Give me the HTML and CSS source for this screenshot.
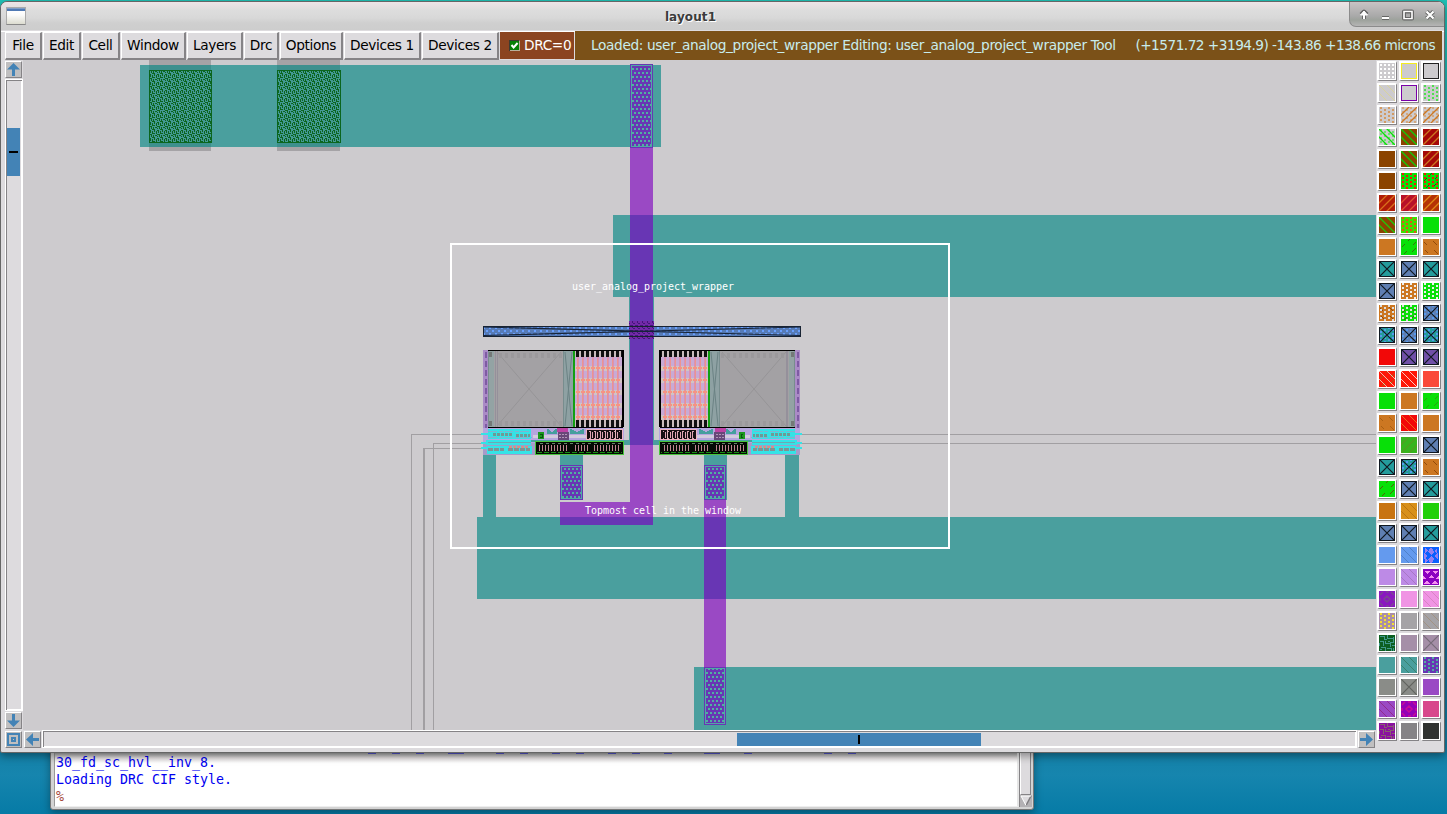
FILE: index.html
```html
<!DOCTYPE html>
<html lang="en">
<head>
<meta charset="utf-8">
<title>layout1</title>
<link rel="stylesheet" href="styles.css">
</head>
<body>
<div class="desktop">
  <section class="console">
    <div class="term">
      <div class="cut"><svg width="800" height="1" shape-rendering="crispEdges"><path d="M312 0h8M336 0h8M360 0h8M392 0h16M440 0h8M464 0h8M496 0h8M520 0h8M552 0h8M576 0h8M608 0h8M648 0h16M688 0h8M768 0h8M792 0h8" stroke="#5555cc" stroke-width="2"/></svg></div>
      <p>30_fd_sc_hvl__inv_8.</p>
      <p>Loading DRC CIF style.</p>
      <p class="prompt">%</p>
    </div>
    <div class="term-scroll"><div class="term-thumb"></div>
      <svg width="12" height="12" viewBox="0 0 12 12"><rect width="12" height="12" fill="#b3b1b4"/><path d="M1 1H11L6 10.5Z" fill="#dddbde"/><path d="M11 1L6 10.5" stroke="#7e7c7f" stroke-width="1.5"/><path d="M6 10.5L1 1H11" fill="none" stroke="#fff"/></svg>
    </div>
  </section>

  <section class="window">
    <header class="titlebar">
      <span class="app-icon"></span>
      <h1>layout1</h1>
      <div class="controls">
        <svg width="94" height="26" viewBox="1350 2 94 26">
          <g fill="none" stroke="#666" stroke-width="4" stroke-linejoin="round"><path d="M1364 20v-6M1361 15.500l3-3 3 3M1382 19h7M1404 12.500h8v7h-8zM1426.500 12.500l7 7M1433.500 12.500l-7 7"/></g>
          <g fill="none" stroke="#fff" stroke-width="2"><path d="M1364 20v-6M1382 19h7"/><path d="M1360.500 16l3.500-4 3.500 4z" fill="#fff" stroke-width="1"/><path d="M1404 12.500h8v7h-8z" stroke-width="1.600"/><path d="M1426.500 12.500l7 7M1433.500 12.500l-7 7" stroke-width="2.200"/></g>
          <rect x="1405.500" y="14" width="5" height="4.500" fill="#aaa" stroke="#666"/>
        </svg>
      </div>
    </header>
    <nav class="menu">
      <button class="w37">File</button><button class="w38">Edit</button><button class="w38">Cell</button><button class="w65">Window</button><button class="w56">Layers</button><button class="w35">Drc</button><button class="w63">Options</button><button class="w77">Devices 1</button><button class="w77">Devices 2</button>
      <div class="drc"><svg width="11" height="11" viewBox="0 0 11 11"><path d="M0 0H11V11H0Z" fill="#b9b09a"/><path d="M0 0H11L10 1V10H1V11H0Z" fill="#3d3a30"/><path d="M1 1H10V10H1Z" fill="#068006"/><path d="M2.500 5L4.600 7.500L8.600 3" fill="none" stroke="#fff" stroke-width="2"/></svg><span>DRC=0</span></div>
      <div class="status"><span class="loaded">Loaded: user_analog_project_wrapper Editing: user_analog_project_wrapper Tool</span><span class="coords">(+1571.72 +3194.9) -143.86 +138.66 microns</span></div>
    </nav>
    <div class="work">
      <div class="vbar">
        <div class="btn"><svg width="13" height="13"><path d="M6.500 0L13 6.500H8V13H5V6.500H0Z"/></svg></div>
        <div class="trough v"><div class="thumb"><i></i></div></div>
        <div class="btn"><svg width="13" height="13"><path d="M6.500 13L13 6.500H8V0H5V6.500H0Z"/></svg></div>
      </div>
      <svg class="canvas" id="canvas" width="1353" height="670" viewBox="23 60 1353 670" shape-rendering="crispEdges"></svg>
      <div class="hbar">
        <div class="btn"><svg width="13" height="13"><path fill-rule="evenodd" d="M0 0H13V13H0ZM2 2V11H11V2ZM4 4H9V9H4ZM6 6V7H7V6Z"/></svg></div>
        <div class="btn"><svg width="13" height="13"><path d="M0 6.500L7 0V5H13V8H7V13Z"/></svg></div>
        <div class="trough h"><div class="thumb"><i></i></div></div>
        <div class="btn"><svg width="13" height="13"><path d="M13 6.500L6 0V5H0V8H6V13Z"/></svg></div>
      </div>
      <div class="palette" id="palette"></div>
    </div>
  </section>
</div>
<script src="script.js"></script>
</body>
</html>
```
FILE: styles.css
```css
* { box-sizing: border-box; }
body { margin: 0; overflow: hidden; font-family: "DejaVu Sans", sans-serif; }
.desktop {
  position: relative; width: 1447px; height: 814px; overflow: hidden;
  background: linear-gradient(#20c4b8 0, #20a5b2 200px, #2399b5 520px, #116f96 650px, #1480a6 750px, #1685ae 775px, #067ba6 814px);
}
.window {
  position: absolute; left: 0; top: 1px; width: 1445px; height: 752px;
  background: #dddbde; border: 1px solid #666;
  border-radius: 7px 7px 2px 2px; box-shadow: 0 3px 9px rgba(0,0,0,.4);
  display: flex; flex-direction: column; overflow: hidden;
}
.titlebar {
  height: 29px; flex: none; display: flex; align-items: flex-start;
  background: linear-gradient(#ece5e7 0, #e6e0e1 4px, #dddddd 8px, #d8d8d8 16px, #cfcfcf 21px, #cdcdcd 28px);
  border-bottom: 1px solid #dddbde;
}
.app-icon {
  width: 20px; height: 18px; margin: 5px 0 0 5px; border: 1px solid #aaa; border-bottom-color: #888;
  background: linear-gradient(#b4c4dc 0, #4f79b4 1px, #4f79b4 3px, #fff 3px, #fbfbfa 7px, #dcdcd0 100%);
}
.titlebar h1 { margin: 7px 0 0; width: 1322px; padding-left: 7px; text-align: center; font-size: 12px; line-height: 17px; color: #3c3c3c; text-shadow: 1px 1px #fff; letter-spacing: .1px; }
.controls {
  margin-left: auto; width: 95px; height: 25px; flex: none; border: 1px solid #8b8b8b; border-width: 0 0 1px 1px;
  border-bottom-left-radius: 7px; background: linear-gradient(#c8c4c5, #a9a9a9 14px, #9da29c 18px, #b5b5b5);
}
.controls svg { display: block; margin-top: -1px; }
.menu { height: 29px; flex: none; display: flex; gap: 1px; padding-left: 4px; padding-right: 2px; background: #dddbde; font-size: 13.7px; letter-spacing: -.36px; box-shadow: inset 0 1px #fff; }
.menu button {
  flex: none; padding: 0 0 2px; margin-top: 1px; height: 28px; border: solid; border-width: 1px 2px 2px 1px; border-color: #fff #858386 #858386 #fff;
  background: #dddbde; font: inherit; letter-spacing: inherit; color: #000; white-space: nowrap; line-height: 22px;
}
.w35 { width: 35px; } .w37 { width: 37px; } .w38 { width: 38px; } .w56 { width: 56px; } .w63 { width: 63px; } .w65 { width: 65px; } .w77 { width: 77px; }
.drc { width: 74px; flex: none; margin: 1px 0 1px; background: #8b4420; color: #fff; display: flex; align-items: center; gap: 4px; padding-left: 9px; line-height: 27px; }
.drc svg { flex: none; }
.status { flex: 1; background: #7b5118; color: #c8ecec; display: flex; justify-content: space-between; padding: 0 7px 0 16px; line-height: 28px; white-space: nowrap; }
.coords { letter-spacing: -.53px; }
.work { flex: 1; display: grid; grid-template-columns: 18px 1353px 67px; grid-template-rows: 670px 20px; padding-left: 4px; }
.vbar { display: flex; flex-direction: column; gap: 1px; padding: 1px 0; }
.btn { width: 17px; height: 17px; flex: none; padding: 1px; border: 1px solid; border-color: #fff #858386 #858386 #fff; background: #c0bfc0; }
.btn svg { display: block; fill: #4383b6; }
.trough { border: 1px solid #fff; flex: 1; background: #dddbde; box-shadow: inset 1px 1px #858386, inset -1px -1px #fff; display: flex; }
.trough.v { padding-top: 48px; padding-left: 1px; }
.trough.h { padding-left: 694px; padding-top: 2px; height: 18px; }
.thumb { background: #4383b6; display: flex; align-items: center; justify-content: center; }
.v .thumb { width: 13px; height: 48px; }
.h .thumb { width: 244px; height: 13px; }
.thumb i { background: #000; }
.v i { width: 9px; height: 2px; }
.h i { width: 2px; height: 9px; }
.canvas { display: block; background: #cdcbce; }
.hbar { grid-column: 1 / 3; grid-row: 2; display: flex; gap: 2px; padding: 0 1px 0 0; }
.hbar .btn { margin-top: 1px; }
.hbar .trough { margin: 0 -1px; }
.palette { grid-column: 3; grid-row: 1 / 3; display: grid; grid-template-columns: repeat(3, 20px); grid-auto-rows: 20px; gap: 2px; padding: 1px 0 0 1px; background: #dddbde; align-content: start; }
.swatch { border: 1px solid; border-width: 2px 1px 1px 2px; border-color: #fff #858386 #858386 #fff; padding: 0 1px 1px 0; background: #fff; display: block; width: 20px; height: 20px; overflow: hidden; }
.console {
  position: absolute; left: 50px; top: 700px; width: 984px; height: 110px; padding: 0 2px 2px 3px; display: flex;
  background: #d3d3d3; border: 1px solid #777; border-radius: 0 0 3px 3px; box-shadow: 0 3px 8px rgba(0,0,0,.35);
}
.term { flex: 1; border-left: 1px solid #999; border-bottom: 1px solid #eee; border-right: 2px solid #e6e6e6; background: linear-gradient(#aaa 0, #aaa 52px, #e8e4e5 57px, #fff 62px); padding: 52px 0 0 1px; font: 13.29px/17px "DejaVu Sans Mono", monospace; color: #0000f0; }
.cut { height: 1px; }
.cut svg { display: block; }
.term p { margin: 0; height: 17px; white-space: pre; }
.term .prompt { color: #a5483a; }
.term-scroll { width: 12px; border-left: 1px solid #858386; background: #b3b1b4; display: flex; flex-direction: column; justify-content: space-between; }
.term-thumb { height: 94px; width: 11px; border: 1px solid; border-color: #fff #858386 #858386 #fff; background: #dddbde; }
.label { font: 10px "DejaVu Sans Mono", monospace; fill: #fff; }
```
FILE: script.js
```javascript
const BG = '#cdcbce', TEAL = '#4a9f9e', PURPLE = '#9a49c4', MIX = '#6836b4';
const rect = (x1, y1, x2, y2, fill, extra = '') =>
  `<rect x="${x1}" y="${y1}" width="${x2 - x1}" height="${y2 - y1}" fill="${fill}" ${extra}/>`;
const line = (d, color, w = 1, extra = '') =>
  `<path d="${d}" fill="none" stroke="${color}" stroke-width="${w}" ${extra}/>`;
const SMOOTH = 'shape-rendering="geometricPrecision"';

/* ---- layer palette ---- */
const GREEN = '#08e008', ORANGE = '#cc7722', BROWN = '#8b4400', DRED = '#a50808', BLUE = '#5f7fb2', CYAN = '#249c9c', VIOLET = '#7050a8', GREY = '#a5a3a6';
const box = c => rect(0, 0, 16, 1, c) + rect(0, 15, 16, 16, c) + rect(0, 0, 1, 16, c) + rect(15, 0, 16, 16, c);
const marks = {
  frame: box,
  grid: c => { let s = ''; for (let y = 1; y < 16; y += 4) for (let x = 1; x < 16; x += 4) s += rect(x, y, x + 2, y + 2, c); return s; },
  dots: c => { let s = ''; for (let i = 0; i < 4; i++) for (let j = 0; j < 4; j++) { const x = 4 * i + 1, y = 4 * j + (i % 2 ? 2 : 0); s += rect(x, y, x + 2, y + 2, c); } return s; },
  back: c => line('M-1 7L9 17M-1 -1L17 17M7 -1L17 9', c, 1.3, SMOOTH),
  fwd: c => line('M-1 9L9 -1M-1 17L17 -1M7 17L17 7', c, 1.3, SMOOTH),
  backThin: c => line('M0 8L8 16M0 0L16 16M8 0L16 8', c, .75, SMOOTH),
  fwdDash: c => line('M1 8L4 5M7 2L9 0M3 15L6 12M11 13L15 9M12 6L15 3', c, .9, SMOOTH),
  backDash: c => line('M1 3L4 6M10 2L14 6M2 11L5 14M11 11L15 15', c, .9, SMOOTH),
  x: c => line('M0 0L16 16M16 0L0 16', c, 1.2, SMOOTH) + box(c),
  thinX: c => line('M0 0L16 16M16 0L0 16', c, 1.2, SMOOTH),
  tri: c => `<path d="M1 2h6l-3 3zM9 2h6l-3 3zM5 9l3-3 3 3zM0 6l3 4H0zM16 6l-3 4h3zM1 15l3-4 3 4zM9 15l3-4 3 4z" fill="${c}"/>`,
  triSide: c => `<path d="M2 1v5l3-2zM7 1l-2 4 3 3 3-3-2-4zM14 1v6l-3-3zM1 6v6l4-3zM15 6v6l-4-3zM7 16l-2-4 3-3 3 3-2 4zM2 16v-5l3 3z" fill="${c}"/>`,
  diamond: c => line('M8 5L11 8L8 11L5 8ZM1 4L4 1M12 1l3 3M1 12l3 3M12 15l3-3M7 1h3M7 15h3M1 7v3M15 7v3', c, 1.5, SMOOTH),
  weave: c => line('M1 1.500h4v3h3M8.500 0v3h5M14.500 2v5h-4M1 6.500h3v4M6 8.500h5v3M2 12.500h4v3M8 13.500h4v2M13 10.500h3M14.500 13v3M9 6.500h2M.5 8v3M1 14.500h2M11.500 9v3M5.500 1v2M6 5.500v3', c, 1)
};
const S = (bg, ...layers) => [bg, layers];
const X = (bg, dot) => dot ? S(bg, ['dots', '#5599ee'], ['x', '#101820']) : S(bg, ['x', '#101820']);
const swatches = [
  S(BG, ['grid', '#fff']), S(BG, ['frame', '#f5ec20']), S(BG, ['frame', '#222']),
  S(BG, ['backThin', '#dcd58a']), S(BG, ['frame', '#7a00a8']), S(BG, ['dots', '#50df50']),
  S(BG, ['dots', '#d29a62']), S(BG, ['dots', '#d2a880'], ['fwd', ORANGE]), S(BG, ['dots', '#d2a880'], ['fwd', ORANGE]),
  S(BG, ['dots', '#70df70'], ['back', GREEN]), S(BROWN, ['back', '#10cc08']), S(DRED, ['fwd', ORANGE]),
  S(BROWN), S(BROWN, ['back', '#10cc08']), S(DRED, ['fwd', ORANGE]),
  S(BROWN), S(GREEN, ['dots', '#f01808']), S(GREEN, ['fwdDash', '#176008'], ['dots', '#f01808']),
  S('#b01c08', ['fwd', '#d8701c']), S('#b81028', ['fwd', '#e05030']), S('#b53205', ['fwd', '#e08818']),
  S(BROWN, ['back', '#20c808']), S('#3ce000', ['dots', '#e05515']), S(GREEN),
  S(ORANGE), S(GREEN, ['fwdDash', '#396b0b']), S(ORANGE, ['backDash', '#8c4507']),
  X(CYAN), X(BLUE), X(CYAN),
  X(BLUE), S(ORANGE, ['dots', '#eee']), S(GREEN, ['dots', '#eee']),
  S(ORANGE, ['backDash', '#8c4507'], ['dots', '#ddd']), S(GREEN, ['fwdDash', '#396b0b'], ['dots', '#ddd']), X(BLUE, 1),
  X(CYAN, 1), X(BLUE, 1), X(CYAN, 1),
  S('#f20808'), X(VIOLET), X(VIOLET),
  S('#ff1808', ['fwdDash', '#a06010'], ['backThin', '#eed']), S('#ff1808', ['backThin', '#fff']), S('#fa4a3a'),
  S(GREEN), S(ORANGE), S(GREEN, ['fwdDash', '#309810']),
  S(ORANGE, ['backDash', '#a65d12']), S('#f20808', ['backThin', '#ee8822']), S(ORANGE),
  S(GREEN), S('#36b51e', ['fwd', '#50a020']), X(BLUE),
  X(CYAN), X(CYAN, 1), S(ORANGE, ['backDash', '#8c4507']),
  S(GREEN, ['fwdDash', '#604f08']), X(BLUE), X(CYAN),
  S('#c87412'), S('#d8901a', ['backThin', '#b06c10']), S('#20d008'),
  X(BLUE), X(BLUE), X(CYAN),
  S('#649aee'), S('#649aee', ['backThin', '#4878bb']), S('#0a60ff', ['triSide', '#9580f0']),
  S('#bd8ae6'), S('#bd8ae6', ['backThin', '#a070b8']), S('#8b00c0', ['tri', '#f48ef0']),
  S('#8a18c0', ['diamond', '#7c4694']), S('#f094e4'), S('#f094e4', ['backThin', '#d080b8']),
  S('#a98ea8', ['dots', '#f5e030']), S(GREY), S(GREY, ['backThin', '#a08c78']),
  S('#0c5e20', ['weave', '#42998c']), S('#a58fa8'), S('#a58fa8', ['thinX', '#776b79']),
  S(TEAL), S(TEAL, ['backThin', '#36785f']), S(MIX, ['dots', '#50b0a0']),
  S('#8a8c88'), S('#8a8c88', ['thinX', '#62645f']), S(PURPLE),
  S(PURPLE, ['backThin', '#8c237c']), S('#9400b6', ['diamond', '#c80c98']), S('#d8488c'),
  S('#8a10a0', ['weave', '#876070']), S('#858386'), S('#303230')
];
document.getElementById('palette').innerHTML = swatches.map(([bg, layers]) =>
  `<svg class="swatch" viewBox="0 0 16 16" shape-rendering="crispEdges">${rect(0, 0, 16, 16, bg)}${layers.map(([k, c]) => marks[k](c)).join('')}</svg>`).join('');

/* ---- layout canvas ---- */
function via(x1, y1, x2, y2) {
  return rect(x1, y1, x2, y2, MIX) + rect(x1 + 1, y1 + 1, x2 - 1, y2 - 1, 'url(#via)') +
    `<rect x="${x1 + 1.5}" y="${y1 + 1.5}" width="${x2 - x1 - 3}" height="${y2 - y1 - 3}" fill="none" stroke="#50a8a4"/>`;
}

function block() {
  let s = rect(483, 350, 488, 428, '#aa8bc6') + line('M485.500 352V428', '#7e5ba4', 2, 'stroke-dasharray="6 3"');
  s += rect(488, 350, 575, 428, '#a3a1a4') + rect(488, 351, 494, 427, '#93a3a4') + rect(563, 351, 573, 427, '#8ea1a3');
  s += line('M495.500 351V427M497 351V427', '#95909b') + line('M497 352L561 426M561 352L497 426', '#969497', 1, SMOOTH) + line('M565 352L572 426M572 352L565 426', '#6b8284', 1, SMOOTH);
  s += line('M499 355H563M499 423H563', '#9b999c', 5, 'stroke-dasharray="3 3"');
  s += line('M563.500 351V427M488.500 351V427', '#788d8e') + rect(489, 352, 492, 357, '#747978') + rect(489, 421, 492, 426, '#747978');
  s += rect(575, 350, 623, 428, '#c8aad5');
  for (const y of [366, 378, 390, 403, 415]) s += rect(575, y, 622, y + 5, '#d1c4c4');
  for (let x = 577; x < 622; x += 5) {
    s += rect(x, 357, x + 2, 420, '#da92b2');
    for (const y of [367, 379, 391, 404, 416]) s += rect(x - 1, y, x + 3, y + 2, '#fb947b');
    s += rect(x, 359, x + 1, 420, '#ed948f');
  }
  s += rect(575, 351, 622, 357, '#c9bdbc') + rect(575, 420, 622, 427, '#c9bdbc');
  for (let x = 576; x < 622; x += 5) s += rect(x, 351, x + 3, 357, '#111') + rect(x, 420, x + 3, 427, '#111');
  s += rect(573, 351, 575, 427, '#12a012') + rect(488, 350, 623, 351, '#000') + rect(622, 350, 624, 427, '#000') + rect(488, 427, 623, 428, '#000');
  s += rect(483, 428, 624, 443, '#b5a6df') + rect(533, 435, 587, 438, '#d3ccdd') + rect(530, 440, 624, 442, '#4aa2a1');
  s += line('M548 433V430L552 433L556 430V433ZM571 433V430L577 433L583 430V433Z', '#459f9e', 1.5);
  s += rect(483, 443, 536, 455, '#a79bc9');
  s += rect(488, 429, 531, 439, '#35e3e6') + rect(486, 440, 531, 445, '#35e3e6') + rect(487, 446, 532, 454, '#35e3e6');
  s += line('M493 434.500H512M516 435H530', '#6e9995', 3, 'stroke-dasharray="3 1"') + line('M488 449.500H504M508 449.500H530', '#819193', 3, 'stroke-dasharray="5 1"');
  s += line('M488 431.500H530M488 437.500H532', '#7fb4cf', 1, 'stroke-dasharray="9 2 4 1"');
  s += line('M509 447H528', '#d88e88', 2, 'stroke-dasharray="3 1"') + line('M487 442.500H531', '#6aa9b5') + line('M490 445.500H532', '#9aa0c9');
  s += rect(481, 433, 488, 435, '#35e3e6') + rect(481, 442, 488, 444, '#35e3e6') + rect(481, 447, 488, 449, '#35e3e6');
  s += rect(538, 432, 544, 439, '#1c991f') + line('M540 434h2v3h-2', '#0a5510');
  s += rect(557, 428, 568, 432, '#bd43a5') + rect(558, 432, 569, 440, '#694779') + line('M559 434.500H568M559 437.500H568', '#b395ba', 1, 'stroke-dasharray="2 1"');
  s += rect(586, 429, 623, 440, '#efb5c2') + rect(587, 430, 622, 439, '#160f12') + line('M590 434.500H620', '#e0a4b3', 6, 'stroke-dasharray="1 1 1 2"');
  s += line('M589 431.500H620M589 438H620', '#d8a5b0', 1, 'stroke-dasharray="2 3"') + rect(615, 430, 616, 439, '#e7b5bb');
  s += rect(535, 441, 624, 455, '#48c53b') + rect(536, 442, 623, 454, '#050a05') + line('M537 452.500H622', '#178c13', 1, 'stroke-dasharray="5 2"');
  s += line('M539 447.500H568M575 447.500H590M594 447.500H620', '#c08591', 6, 'stroke-dasharray="1 2"') + line('M540 443.500H621', '#64846a', 1, 'stroke-dasharray="3 3"');
  return s;
}

let art = `<defs>
<pattern id="via" width="4" height="8" x="0" y="3" patternUnits="userSpaceOnUse">${rect(0, 1, 2, 3, '#50b0a0')}${rect(2, 5, 4, 7, '#50b0a0')}</pattern>
<pattern id="weave" width="8" height="8" x="149" y="70" patternUnits="userSpaceOnUse"><rect width="8" height="8" fill="#439994"/><path d="M0 .5h3M2.500 0v3M3 3.500h3M5.500 4v2M6 1.500h2M4.500 1v2M0 4.500h2M1.500 5v2M3 7.500h3M7.500 5v3M0 2.500h1M3.500 5v2" stroke="#0b651e" fill="none"/></pattern>
<pattern id="blue" width="6" height="6" patternUnits="userSpaceOnUse"><rect width="6" height="6" fill="#567bb6"/><path d="M0 1h2M3 4h2" stroke="#69a0ff" stroke-width="2"/></pattern>
<pattern id="knot" width="5" height="5" patternUnits="userSpaceOnUse"><rect width="5" height="5" fill="#7329a9"/><path d="M0 .5h3M2.500 0v3M3 3.500h2" stroke="#421779"/></pattern>
</defs>`;
art += rect(149, 60, 211, 151, '#a5a3a6') + rect(277, 60, 340, 151, '#a5a3a6');
art += rect(140, 65, 661, 147, TEAL) + rect(149, 65, 211, 147, '#3d908e') + rect(277, 65, 340, 147, '#3d908e');
for (const [a, b] of [[149, 212], [277, 341]])
  art += rect(a, 70, b, 143, 'url(#weave)') + `<rect x="${a + .5}" y="70.5" width="${b - a - 1}" height="72" fill="none" stroke="#0b651e"/>`;
art += rect(613, 215, 1376, 297, TEAL) + rect(477, 517, 1376, 599, TEAL) + rect(694, 667, 1376, 730, TEAL);
art += rect(483, 452, 496, 517, TEAL) + rect(560, 452, 583, 500, TEAL) + rect(704, 452, 727, 500, TEAL) + rect(785, 452, 799, 517, TEAL);
art += rect(629, 297, 654, 445, TEAL) + rect(622, 440, 661, 445, TEAL);
art += rect(630, 64, 653, 525, PURPLE) + rect(630, 215, 653, 445, MIX) + rect(560, 502, 653, 525, PURPLE) + rect(560, 517, 653, 525, MIX);
art += rect(704, 499, 726, 725, PURPLE) + rect(704, 517, 726, 599, MIX);
art += via(630, 64, 653, 148) + via(560, 465, 583, 500) + via(704, 465, 726, 500) + via(704, 667, 726, 725);
art += line('M411.500 730V434.500H486M433.500 730V443.500H486M798 434.500H1376M798 443.500H1376', '#a19fa2') + line('M424 730V448.500', '#a19fa2', 2) + line('M423 448.500H486', '#a19fa2');
art += rect(483, 326, 801, 337, 'url(#blue)') + rect(629, 321, 654, 339, 'url(#knot)');
art += line('M483.500 326.500H800.500V336H483.500Z', '#182333') + line('M484 327L800 335.500M484 335.500L800 327', '#17253a', 1.1, SMOOTH);
art += block() + `<g transform="translate(1283 0) scale(-1 1)">${block()}</g>`;
art += '<rect x="451" y="244" width="498" height="304" fill="none" stroke="#fff" stroke-width="2"/>';
art += '<text class="label" x="572" y="290" textLength="162">user_analog_project_wrapper</text><text class="label" x="585" y="514" textLength="156">Topmost cell in the window</text>';
document.getElementById('canvas').innerHTML = art;
```
